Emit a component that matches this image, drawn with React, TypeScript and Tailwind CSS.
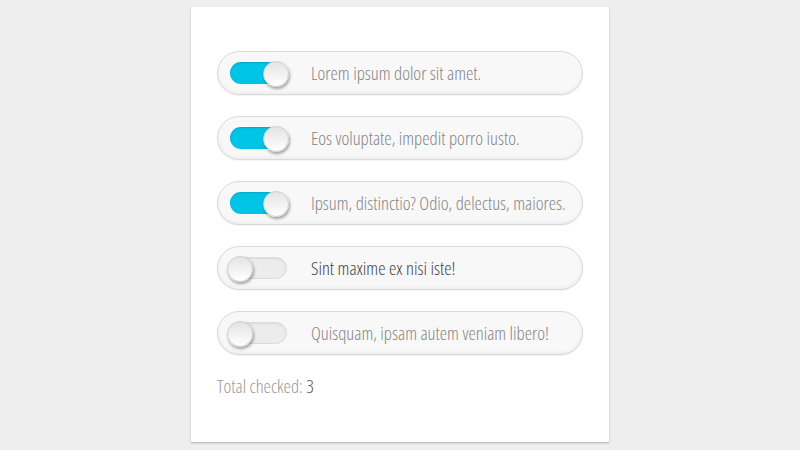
import React from "react";

const items = [
  { label: "Lorem ipsum dolor sit amet.", on: true },
  { label: "Eos voluptate, impedit porro iusto.", on: true },
  { label: "Ipsum, distinctio? Odio, delectus, maiores.", on: true },
  { label: "Sint maxime ex nisi iste!", on: false, dark: true },
  { label: "Quisquam, ipsam autem veniam libero!", on: false },
];

function Toggle({ on }: { on: boolean }) {
  return (
    <div className="relative w-[58px] h-[26px] flex items-center">
      <div
        className={
          on
            ? "w-[50px] h-[22px] ml-[1px] rounded-full bg-[#00c4e6] shadow-[inset_0_1px_2px_rgba(0,0,0,0.15)]"
            : "w-[58px] h-[22px] rounded-full bg-[#ececec] border border-[#dcdcdc] shadow-[inset_0_1px_2px_rgba(0,0,0,0.08)]"
        }
      />
      <div
        className={
          "absolute top-[1px] w-[26px] h-[26px] rounded-full bg-gradient-to-b from-[#e4e4e4] to-[#ffffff] border border-[#d0d0d0] shadow-[1px_2px_3px_rgba(0,0,0,0.35)] " +
          (on ? "left-[34px]" : "left-[-2px]")
        }
      />
    </div>
  );
}

export default function App() {
  return (
    <div
      className="w-[800px] h-[450px] bg-[#eeeeee] flex justify-center pt-[7px]"
      style={{ fontFamily: '"Open Sans", "Liberation Sans", sans-serif' }}
    >
      <div className="w-[418px] h-[435px] bg-white shadow-[0_1px_2px_rgba(0,0,0,0.25)] pt-[44px] px-[26px]">
        <div className="flex flex-col gap-[21px]">
          {items.map((it, i) => (
            <div
              key={i}
              className="h-[44px] w-[366px] rounded-full bg-[#f8f8f8] border border-[#d9d9d9] shadow-[inset_0_-2px_3px_rgba(0,0,0,0.04),0_1px_1px_rgba(0,0,0,0.05)] flex items-center pl-[11px]"
            >
              <Toggle on={it.on} />
              <span
                className={
                  "ml-[24px] text-[18.6px] font-light leading-none " +
                  (it.dark ? "text-[#444444]" : "text-[#858585]")
                }
                style={{ fontStretch: "75%" }}
              >
                {it.label}
              </span>
            </div>
          ))}
        </div>
        <div
          className="mt-[17px] text-[18.6px] font-light text-[#999999]"
          style={{ fontStretch: "75%" }}
        >
          Total checked: <span className="text-[#555555]">3</span>
        </div>
      </div>
    </div>
  );
}
